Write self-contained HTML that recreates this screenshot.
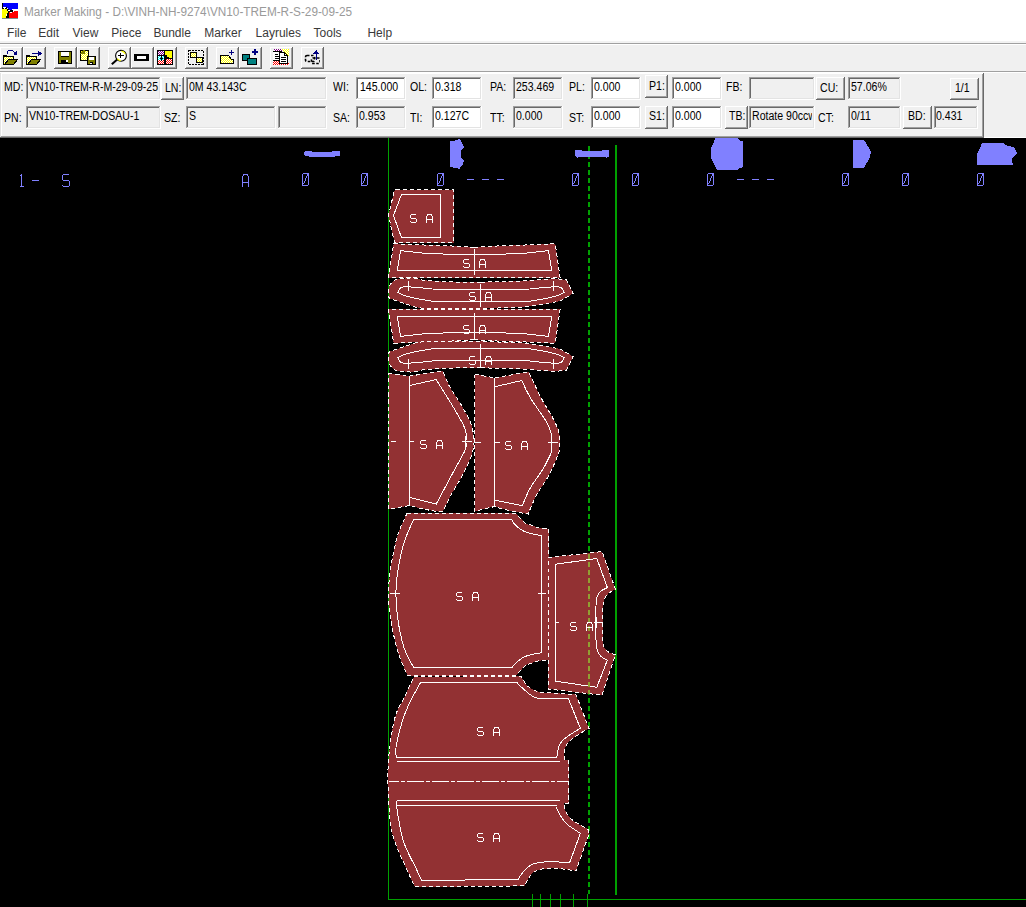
<!DOCTYPE html><html><head><meta charset="utf-8"><style>
html,body{margin:0;padding:0;}body{width:1026px;height:907px;overflow:hidden;position:relative;background:#f0f0f0;font-family:"Liberation Sans",sans-serif;}
div{box-sizing:border-box;}
</style></head><body>
<div style="position:absolute;left:0px;top:0px;width:1026px;height:43px;background:#ffffff;"></div>
<svg style="position:absolute;left:2px;top:3px" width="16" height="16" viewBox="0 0 16 16" shape-rendering="crispEdges"><rect x="0" y="0" width="1" height="1" fill="#000"/><rect x="1" y="0" width="15" height="1" fill="#0000ff"/><rect x="0" y="1" width="1" height="1" fill="#000"/><rect x="1" y="1" width="15" height="1" fill="#0000ff"/><rect x="0" y="2" width="1" height="1" fill="#000"/><rect x="1" y="2" width="15" height="1" fill="#0000ff"/><rect x="0" y="3" width="1" height="1" fill="#000"/><rect x="1" y="3" width="15" height="1" fill="#0000ff"/><rect x="0" y="4" width="1" height="1" fill="#000"/><rect x="1" y="4" width="3" height="1" fill="#ffffff"/><rect x="4" y="4" width="1" height="1" fill="#000"/><rect x="5" y="4" width="11" height="1" fill="#0000ff"/><rect x="0" y="5" width="2" height="1" fill="#000"/><rect x="2" y="5" width="1" height="1" fill="#ffffff"/><rect x="3" y="5" width="2" height="1" fill="#000"/><rect x="5" y="5" width="1" height="1" fill="#ffffff"/><rect x="6" y="5" width="10" height="1" fill="#0000ff"/><rect x="0" y="6" width="5" height="1" fill="#ffff00"/><rect x="5" y="6" width="2" height="1" fill="#000"/><rect x="7" y="6" width="3" height="1" fill="#0000ff"/><rect x="10" y="6" width="6" height="1" fill="#ffffff"/><rect x="0" y="7" width="5" height="1" fill="#ffff00"/><rect x="5" y="7" width="1" height="1" fill="#000"/><rect x="6" y="7" width="2" height="1" fill="#ffffff"/><rect x="8" y="7" width="3" height="1" fill="#000"/><rect x="11" y="7" width="5" height="1" fill="#ffffff"/><rect x="0" y="8" width="6" height="1" fill="#ffff00"/><rect x="6" y="8" width="5" height="1" fill="#000"/><rect x="11" y="8" width="1" height="1" fill="#ffffff"/><rect x="12" y="8" width="4" height="1" fill="#ff0000"/><rect x="0" y="9" width="6" height="1" fill="#ffff00"/><rect x="6" y="9" width="1" height="1" fill="#000"/><rect x="7" y="9" width="1" height="1" fill="#ff0000"/><rect x="8" y="9" width="2" height="1" fill="#ffffff"/><rect x="10" y="9" width="6" height="1" fill="#ff0000"/><rect x="0" y="10" width="5" height="1" fill="#ffff00"/><rect x="5" y="10" width="2" height="1" fill="#000"/><rect x="7" y="10" width="9" height="1" fill="#ff0000"/><rect x="0" y="11" width="4" height="1" fill="#ffff00"/><rect x="4" y="11" width="1" height="1" fill="#ffffff"/><rect x="5" y="11" width="2" height="1" fill="#000"/><rect x="7" y="11" width="9" height="1" fill="#ff0000"/><rect x="0" y="12" width="4" height="1" fill="#ffff00"/><rect x="4" y="12" width="1" height="1" fill="#ffffff"/><rect x="5" y="12" width="2" height="1" fill="#000"/><rect x="7" y="12" width="9" height="1" fill="#ff0000"/><rect x="0" y="13" width="4" height="1" fill="#ffff00"/><rect x="4" y="13" width="3" height="1" fill="#000"/><rect x="7" y="13" width="9" height="1" fill="#ff0000"/><rect x="0" y="14" width="4" height="1" fill="#ffff00"/><rect x="4" y="14" width="3" height="1" fill="#000"/><rect x="7" y="14" width="9" height="1" fill="#ff0000"/><rect x="0" y="15" width="16" height="1" fill="#7f8f8f"/></svg>
<div style="position:absolute;left:24px;top:6.09px;font-size:12px;line-height:12px;color:#9a9a9a;white-space:nowrap;transform:scaleX(0.981800766283525);transform-origin:0 0;">Marker Making - D:\VINH-NH-9274\VN10-TREM-R-S-29-09-25</div>
<div style="position:absolute;left:7.1px;top:27.09px;font-size:12px;line-height:12px;color:#3a3a3a;white-space:nowrap;">File</div>
<div style="position:absolute;left:38.3px;top:27.09px;font-size:12px;line-height:12px;color:#3a3a3a;white-space:nowrap;">Edit</div>
<div style="position:absolute;left:72.5px;top:27.09px;font-size:12px;line-height:12px;color:#3a3a3a;white-space:nowrap;">View</div>
<div style="position:absolute;left:111.3px;top:27.09px;font-size:12px;line-height:12px;color:#3a3a3a;white-space:nowrap;">Piece</div>
<div style="position:absolute;left:153.5px;top:27.09px;font-size:12px;line-height:12px;color:#3a3a3a;white-space:nowrap;">Bundle</div>
<div style="position:absolute;left:204.3px;top:27.09px;font-size:12px;line-height:12px;color:#3a3a3a;white-space:nowrap;">Marker</div>
<div style="position:absolute;left:255.6px;top:27.09px;font-size:12px;line-height:12px;color:#3a3a3a;white-space:nowrap;">Layrules</div>
<div style="position:absolute;left:313.6px;top:27.09px;font-size:12px;line-height:12px;color:#3a3a3a;white-space:nowrap;">Tools</div>
<div style="position:absolute;left:367.4px;top:27.09px;font-size:12px;line-height:12px;color:#3a3a3a;white-space:nowrap;">Help</div>
<div style="position:absolute;left:0px;top:41px;width:1026px;height:2px;background:#f2f2f2;"></div>
<div style="position:absolute;left:0px;top:43px;width:1026px;height:1px;background:#a0a0a0;"></div>
<div style="position:absolute;left:0px;top:44px;width:1026px;height:1px;background:#ffffff;"></div>
<div style="position:absolute;left:0px;top:45px;width:1026px;height:26px;background:#f0f0f0;"></div>
<div style="position:absolute;left:0px;top:71px;width:1026px;height:1px;background:#a0a0a0;"></div>
<div style="position:absolute;left:0px;top:72px;width:1026px;height:1px;background:#ffffff;"></div>
<div style="position:absolute;left:0px;top:47px;width:23px;height:22px;background:#696969;"></div>
<div style="position:absolute;left:0px;top:47px;width:22px;height:21px;background:#ffffff;"></div>
<div style="position:absolute;left:1px;top:48px;width:21px;height:20px;background:#a0a0a0;"></div>
<div style="position:absolute;left:1px;top:48px;width:20px;height:19px;background:#f0f0f0;"></div>
<div style="position:absolute;left:23px;top:47px;width:23px;height:22px;background:#696969;"></div>
<div style="position:absolute;left:23px;top:47px;width:22px;height:21px;background:#ffffff;"></div>
<div style="position:absolute;left:24px;top:48px;width:21px;height:20px;background:#a0a0a0;"></div>
<div style="position:absolute;left:24px;top:48px;width:20px;height:19px;background:#f0f0f0;"></div>
<div style="position:absolute;left:54px;top:47px;width:23px;height:22px;background:#696969;"></div>
<div style="position:absolute;left:54px;top:47px;width:22px;height:21px;background:#ffffff;"></div>
<div style="position:absolute;left:55px;top:48px;width:21px;height:20px;background:#a0a0a0;"></div>
<div style="position:absolute;left:55px;top:48px;width:20px;height:19px;background:#f0f0f0;"></div>
<div style="position:absolute;left:77px;top:47px;width:23px;height:22px;background:#696969;"></div>
<div style="position:absolute;left:77px;top:47px;width:22px;height:21px;background:#ffffff;"></div>
<div style="position:absolute;left:78px;top:48px;width:21px;height:20px;background:#a0a0a0;"></div>
<div style="position:absolute;left:78px;top:48px;width:20px;height:19px;background:#f0f0f0;"></div>
<div style="position:absolute;left:108px;top:47px;width:23px;height:22px;background:#696969;"></div>
<div style="position:absolute;left:108px;top:47px;width:22px;height:21px;background:#ffffff;"></div>
<div style="position:absolute;left:109px;top:48px;width:21px;height:20px;background:#a0a0a0;"></div>
<div style="position:absolute;left:109px;top:48px;width:20px;height:19px;background:#f0f0f0;"></div>
<div style="position:absolute;left:131px;top:47px;width:23px;height:22px;background:#696969;"></div>
<div style="position:absolute;left:131px;top:47px;width:22px;height:21px;background:#ffffff;"></div>
<div style="position:absolute;left:132px;top:48px;width:21px;height:20px;background:#a0a0a0;"></div>
<div style="position:absolute;left:132px;top:48px;width:20px;height:19px;background:#f0f0f0;"></div>
<div style="position:absolute;left:154px;top:47px;width:23px;height:22px;background:#696969;"></div>
<div style="position:absolute;left:154px;top:47px;width:22px;height:21px;background:#ffffff;"></div>
<div style="position:absolute;left:155px;top:48px;width:21px;height:20px;background:#a0a0a0;"></div>
<div style="position:absolute;left:155px;top:48px;width:20px;height:19px;background:#f0f0f0;"></div>
<div style="position:absolute;left:185px;top:47px;width:23px;height:22px;background:#696969;"></div>
<div style="position:absolute;left:185px;top:47px;width:22px;height:21px;background:#ffffff;"></div>
<div style="position:absolute;left:186px;top:48px;width:21px;height:20px;background:#a0a0a0;"></div>
<div style="position:absolute;left:186px;top:48px;width:20px;height:19px;background:#f0f0f0;"></div>
<div style="position:absolute;left:216px;top:47px;width:23px;height:22px;background:#696969;"></div>
<div style="position:absolute;left:216px;top:47px;width:22px;height:21px;background:#ffffff;"></div>
<div style="position:absolute;left:217px;top:48px;width:21px;height:20px;background:#a0a0a0;"></div>
<div style="position:absolute;left:217px;top:48px;width:20px;height:19px;background:#f0f0f0;"></div>
<div style="position:absolute;left:239px;top:47px;width:23px;height:22px;background:#696969;"></div>
<div style="position:absolute;left:239px;top:47px;width:22px;height:21px;background:#ffffff;"></div>
<div style="position:absolute;left:240px;top:48px;width:21px;height:20px;background:#a0a0a0;"></div>
<div style="position:absolute;left:240px;top:48px;width:20px;height:19px;background:#f0f0f0;"></div>
<div style="position:absolute;left:270px;top:47px;width:23px;height:22px;background:#696969;"></div>
<div style="position:absolute;left:270px;top:47px;width:22px;height:21px;background:#ffffff;"></div>
<div style="position:absolute;left:271px;top:48px;width:21px;height:20px;background:#a0a0a0;"></div>
<div style="position:absolute;left:271px;top:48px;width:20px;height:19px;background:#f0f0f0;"></div>
<div style="position:absolute;left:301px;top:47px;width:23px;height:22px;background:#696969;"></div>
<div style="position:absolute;left:301px;top:47px;width:22px;height:21px;background:#ffffff;"></div>
<div style="position:absolute;left:302px;top:48px;width:21px;height:20px;background:#a0a0a0;"></div>
<div style="position:absolute;left:302px;top:48px;width:20px;height:19px;background:#f0f0f0;"></div>
<svg width="0" height="0" style="position:absolute"><defs>
<pattern id="chy" width="2" height="2" patternUnits="userSpaceOnUse"><rect width="2" height="2" fill="#ffff00"/><rect width="1" height="1" fill="#ffffff"/><rect x="1" y="1" width="1" height="1" fill="#ffffff"/></pattern>
<pattern id="chr" width="2" height="2" patternUnits="userSpaceOnUse"><rect width="2" height="2" fill="#ff0000"/><rect width="1" height="1" fill="#ffffff"/><rect x="1" y="1" width="1" height="1" fill="#ffffff"/></pattern>
<pattern id="chp" width="2" height="2" patternUnits="userSpaceOnUse"><rect width="2" height="2" fill="#800080"/><rect width="1" height="1" fill="#ffffff"/><rect x="1" y="1" width="1" height="1" fill="#ffffff"/></pattern>
<pattern id="chc" width="2" height="2" patternUnits="userSpaceOnUse"><rect width="2" height="2" fill="#00ffff"/><rect width="1" height="1" fill="#ffffff"/><rect x="1" y="1" width="1" height="1" fill="#ffffff"/></pattern>
</defs></svg>
<svg style="position:absolute;left:3px;top:49px" width="16" height="16" viewBox="0 0 16 16" shape-rendering="crispEdges"><rect x="0" y="6" width="4" height="1" fill="#000"/>
<rect x="0" y="7" width="11" height="9" fill="#000"/>
<rect x="1" y="8" width="9" height="7" fill="url(#chy)"/>
<polygon points="1.5,15.5 5.5,10.5 14.5,10.5 10.5,15.5" fill="#808000" stroke="#000" stroke-width="1"/><path d="M4.5,4.5 L4.5,2.5 L5.5,1.5 L9.5,1.5 L11.5,3.5" fill="none" stroke="#000080" stroke-width="1"/>
<polygon points="10,4 14,2 14,6" fill="#000080"/><rect x="11" y="3" width="3" height="3" fill="#000080"/></svg>
<svg style="position:absolute;left:26px;top:49px" width="16" height="16" viewBox="0 0 16 16" shape-rendering="crispEdges"><rect x="0" y="6" width="4" height="1" fill="#000"/>
<rect x="0" y="7" width="11" height="9" fill="#000"/>
<rect x="1" y="8" width="9" height="7" fill="url(#chy)"/>
<polygon points="1.5,15.5 5.5,10.5 14.5,10.5 10.5,15.5" fill="#808000" stroke="#000" stroke-width="1"/><rect x="6" y="4" width="8" height="1" fill="#000080"/><polygon points="12,1.5 16,4.5 12,7.5" fill="#000080"/></svg>
<svg style="position:absolute;left:57px;top:49px" width="16" height="16" viewBox="0 0 16 16" shape-rendering="crispEdges"><rect x="1" y="2" width="14" height="13" fill="#000"/>
<rect x="2" y="3" width="12" height="11" fill="#808000"/>
<rect x="4" y="3" width="8" height="5" fill="#000"/><rect x="4" y="3" width="8" height="4" fill="#fff"/>
<rect x="4" y="11" width="7" height="4" fill="#000"/><rect x="9" y="11" width="2" height="2" fill="#fff"/></svg>
<svg style="position:absolute;left:80px;top:49px" width="16" height="16" viewBox="0 0 16 16" shape-rendering="crispEdges"><rect x="0" y="1" width="9" height="11" fill="#000"/>
<rect x="1" y="2" width="7" height="9" fill="url(#chy)"/>
<polygon points="0,4 3,1 5,1 5,5 0,5" fill="#808000"/>
<rect x="7" y="7" width="9" height="9" fill="#000"/>
<rect x="8" y="8" width="7" height="7" fill="#808000"/>
<rect x="9" y="8" width="5" height="3" fill="#fff"/><rect x="10" y="13" width="3" height="2" fill="#000"/><rect x="10" y="14" width="2" height="1" fill="#fff"/></svg>
<svg style="position:absolute;left:111px;top:49px" width="16" height="16" viewBox="0 0 16 16" shape-rendering="crispEdges"><circle cx="10" cy="6.8" r="5.4" fill="#fff" stroke="#000" stroke-width="1.1" shape-rendering="auto"/>
<path d="M6.2,9.6 A5,5 0 0 0 9.8,11.6" fill="none" stroke="#ffff00" stroke-width="1.3" shape-rendering="auto"/>
<path d="M10.5,2.2 A5,5 0 0 1 14.2,4.8" fill="none" stroke="#ffff00" stroke-width="1.3" shape-rendering="auto"/>
<rect x="7" y="6" width="6" height="1" fill="#000"/><rect x="9" y="4" width="1" height="5" fill="#000"/>
<line x1="0.8" y1="15.2" x2="6.2" y2="10.4" stroke="#000" stroke-width="2" shape-rendering="auto"/></svg>
<svg style="position:absolute;left:134px;top:49px" width="16" height="16" viewBox="0 0 16 16" shape-rendering="crispEdges"><rect x="0" y="5" width="15" height="7" fill="#000"/><rect x="3" y="7" width="9" height="3" fill="#fff"/></svg>
<svg style="position:absolute;left:157px;top:49px" width="16" height="16" viewBox="0 0 16 16" shape-rendering="crispEdges"><rect x="0" y="1" width="16" height="15" fill="#000"/>
<rect x="1" y="2" width="6" height="4" fill="url(#chp)"/>
<polygon points="8,2 15,2 15,9 12,9 12,8 10,8 10,6 8,6" fill="#ffff00"/>
<rect x="1" y="7" width="6" height="4" fill="url(#chc)"/>
<rect x="1" y="11" width="6" height="4" fill="url(#chr)"/>
<rect x="9" y="10" width="6" height="5" fill="url(#chr)"/>
<rect x="3" y="9" width="3" height="1" fill="#000"/><rect x="4" y="7" width="1" height="5" fill="#000"/></svg>
<svg style="position:absolute;left:188px;top:49px" width="16" height="16" viewBox="0 0 16 16" shape-rendering="crispEdges"><rect x="0.5" y="1.5" width="15" height="14" fill="none" stroke="#000" stroke-dasharray="2 1"/>
<rect x="2" y="3" width="7" height="6" fill="#000"/><rect x="3" y="4" width="5" height="4" fill="url(#chy)"/>
<rect x="8" y="8" width="7" height="6" fill="#000"/><rect x="9" y="9" width="5" height="4" fill="url(#chy)"/></svg>
<svg style="position:absolute;left:219px;top:49px" width="16" height="16" viewBox="0 0 16 16" shape-rendering="crispEdges"><polygon points="1.5,6.5 9.5,6.5 12.5,10.5 14.5,10.5 14.5,14.5 1.5,14.5" fill="url(#chy)" stroke="#000" stroke-width="1"/>
<rect x="10" y="3" width="5" height="1" fill="#000080"/><rect x="12" y="1" width="1" height="5" fill="#000080"/></svg>
<svg style="position:absolute;left:242px;top:49px" width="16" height="16" viewBox="0 0 16 16" shape-rendering="crispEdges"><rect x="0" y="5" width="8" height="7" fill="#000"/><rect x="1" y="6" width="6" height="5" fill="#008080"/>
<rect x="5" y="9" width="10" height="7" fill="#000"/><rect x="6" y="10" width="8" height="5" fill="#008080"/>
<rect x="10" y="2" width="6" height="2" fill="#000080"/><rect x="12" y="0" width="2" height="6" fill="#000080"/></svg>
<svg style="position:absolute;left:273px;top:49px" width="16" height="16" viewBox="0 0 16 16" shape-rendering="crispEdges"><rect x="1" y="0" width="8" height="2" fill="url(#chp)"/>
<polygon points="8,0 16,0 16,8" fill="url(#chy)"/>
<rect x="0" y="12" width="7" height="4" fill="url(#chr)"/>
<rect x="6" y="14" width="10" height="2" fill="url(#chr)"/>
<rect x="0" y="2" width="9" height="10" fill="#fff"/>
<rect x="0" y="2" width="9" height="1" fill="#000"/>
<rect x="2" y="5" width="3" height="1" fill="#000"/><rect x="2" y="7" width="4" height="1" fill="#000"/><rect x="2" y="9" width="4" height="1" fill="#000"/><rect x="0" y="11" width="6" height="1" fill="#000"/>
<polygon points="6.5,3.5 11.5,3.5 14.5,6.5 14.5,14.5 6.5,14.5" fill="#fff" stroke="#000" stroke-width="1"/>
<rect x="11" y="4" width="1" height="3" fill="#000"/><rect x="11" y="6" width="3" height="1" fill="#000"/>
<rect x="8" y="8" width="5" height="1" fill="#000"/><rect x="8" y="10" width="5" height="1" fill="#000"/><rect x="8" y="12" width="5" height="1" fill="#000"/></svg>
<svg style="position:absolute;left:304px;top:49px" width="16" height="16" viewBox="0 0 16 16" shape-rendering="crispEdges"><rect x="1.5" y="6.5" width="9" height="6" rx="1.5" fill="none" stroke="#000" stroke-width="1.6" stroke-dasharray="2.5 1.5" shape-rendering="auto"/>
<rect x="7.5" y="9" width="8.5" height="5.5" rx="1.5" fill="none" stroke="#000" stroke-width="1.6" stroke-dasharray="2.5 1.5" shape-rendering="auto"/>
<rect x="11.5" y="4" width="1.5" height="7" fill="#000080"/><polygon points="9,5 12.25,1 15.5,5" fill="#000080"/></svg>
<div style="position:absolute;left:0px;top:73px;width:984px;height:65px;background:#696969;"></div>
<div style="position:absolute;left:0px;top:73px;width:983px;height:64px;background:#ffffff;"></div>
<div style="position:absolute;left:1px;top:74px;width:982px;height:63px;background:#a0a0a0;"></div>
<div style="position:absolute;left:1px;top:74px;width:981px;height:62px;background:#f0f0f0;"></div>
<div style="position:absolute;left:0px;top:73px;width:1px;height:64px;background:#e3e3e3;"></div>
<div style="position:absolute;left:1px;top:73px;width:1px;height:63px;background:#ffffff;"></div>
<div style="position:absolute;left:984px;top:137px;width:42px;height:1px;background:#ffffff;"></div>
<div style="position:absolute;left:3.5px;top:81.09px;font-size:12px;line-height:12px;color:#000;white-space:nowrap;transform:scaleX(0.88);transform-origin:0 0;">MD:</div>
<div style="position:absolute;left:26px;top:77px;width:135px;height:23px;background:#ffffff;"></div>
<div style="position:absolute;left:26px;top:77px;width:134px;height:22px;background:#a0a0a0;"></div>
<div style="position:absolute;left:27px;top:78px;width:133px;height:21px;background:#e3e3e3;"></div>
<div style="position:absolute;left:27px;top:78px;width:132px;height:20px;background:#696969;"></div>
<div style="position:absolute;left:28px;top:79px;width:131px;height:19px;background:#f0f0f0;"></div>
<div style="position:absolute;left:29px;top:81.09px;font-size:12px;line-height:12px;color:#000;white-space:nowrap;transform:scaleX(0.88);transform-origin:0 0;">VN10-TREM-R-M-29-09-25</div>
<div style="position:absolute;left:161px;top:77px;width:23px;height:23px;background:#696969;"></div>
<div style="position:absolute;left:161px;top:77px;width:22px;height:22px;background:#ffffff;"></div>
<div style="position:absolute;left:162px;top:78px;width:21px;height:21px;background:#a0a0a0;"></div>
<div style="position:absolute;left:162px;top:78px;width:20px;height:20px;background:#f0f0f0;"></div>
<div style="position:absolute;left:164.5px;top:82.09px;font-size:12px;line-height:12px;color:#000;white-space:nowrap;transform:scaleX(0.88);transform-origin:0 0;">LN:</div>
<div style="position:absolute;left:186px;top:77px;width:141px;height:23px;background:#ffffff;"></div>
<div style="position:absolute;left:186px;top:77px;width:140px;height:22px;background:#a0a0a0;"></div>
<div style="position:absolute;left:187px;top:78px;width:139px;height:21px;background:#e3e3e3;"></div>
<div style="position:absolute;left:187px;top:78px;width:138px;height:20px;background:#696969;"></div>
<div style="position:absolute;left:188px;top:79px;width:137px;height:19px;background:#f0f0f0;"></div>
<div style="position:absolute;left:189px;top:81.09px;font-size:12px;line-height:12px;color:#000;white-space:nowrap;transform:scaleX(0.88);transform-origin:0 0;">0M 43.143C</div>
<div style="position:absolute;left:333px;top:81.09px;font-size:12px;line-height:12px;color:#000;white-space:nowrap;transform:scaleX(0.88);transform-origin:0 0;">WI:</div>
<div style="position:absolute;left:356px;top:77px;width:50px;height:23px;background:#ffffff;"></div>
<div style="position:absolute;left:356px;top:77px;width:49px;height:22px;background:#a0a0a0;"></div>
<div style="position:absolute;left:357px;top:78px;width:48px;height:21px;background:#e3e3e3;"></div>
<div style="position:absolute;left:357px;top:78px;width:47px;height:20px;background:#696969;"></div>
<div style="position:absolute;left:358px;top:79px;width:46px;height:19px;background:#ffffff;"></div>
<div style="position:absolute;left:360px;top:81.09px;font-size:12px;line-height:12px;color:#000;white-space:nowrap;transform:scaleX(0.88);transform-origin:0 0;">145.000</div>
<div style="position:absolute;left:410px;top:81.09px;font-size:12px;line-height:12px;color:#000;white-space:nowrap;transform:scaleX(0.88);transform-origin:0 0;">OL:</div>
<div style="position:absolute;left:432px;top:77px;width:50px;height:23px;background:#ffffff;"></div>
<div style="position:absolute;left:432px;top:77px;width:49px;height:22px;background:#a0a0a0;"></div>
<div style="position:absolute;left:433px;top:78px;width:48px;height:21px;background:#e3e3e3;"></div>
<div style="position:absolute;left:433px;top:78px;width:47px;height:20px;background:#696969;"></div>
<div style="position:absolute;left:434px;top:79px;width:46px;height:19px;background:#ffffff;"></div>
<div style="position:absolute;left:435px;top:81.09px;font-size:12px;line-height:12px;color:#000;white-space:nowrap;transform:scaleX(0.88);transform-origin:0 0;">0.318</div>
<div style="position:absolute;left:489.5px;top:81.09px;font-size:12px;line-height:12px;color:#000;white-space:nowrap;transform:scaleX(0.88);transform-origin:0 0;">PA:</div>
<div style="position:absolute;left:513px;top:77px;width:50px;height:23px;background:#ffffff;"></div>
<div style="position:absolute;left:513px;top:77px;width:49px;height:22px;background:#a0a0a0;"></div>
<div style="position:absolute;left:514px;top:78px;width:48px;height:21px;background:#e3e3e3;"></div>
<div style="position:absolute;left:514px;top:78px;width:47px;height:20px;background:#696969;"></div>
<div style="position:absolute;left:515px;top:79px;width:46px;height:19px;background:#f0f0f0;"></div>
<div style="position:absolute;left:516px;top:81.09px;font-size:12px;line-height:12px;color:#000;white-space:nowrap;transform:scaleX(0.88);transform-origin:0 0;">253.469</div>
<div style="position:absolute;left:569px;top:81.09px;font-size:12px;line-height:12px;color:#000;white-space:nowrap;transform:scaleX(0.88);transform-origin:0 0;">PL:</div>
<div style="position:absolute;left:591px;top:77px;width:50px;height:23px;background:#ffffff;"></div>
<div style="position:absolute;left:591px;top:77px;width:49px;height:22px;background:#a0a0a0;"></div>
<div style="position:absolute;left:592px;top:78px;width:48px;height:21px;background:#e3e3e3;"></div>
<div style="position:absolute;left:592px;top:78px;width:47px;height:20px;background:#696969;"></div>
<div style="position:absolute;left:593px;top:79px;width:46px;height:19px;background:#ffffff;"></div>
<div style="position:absolute;left:594px;top:81.09px;font-size:12px;line-height:12px;color:#000;white-space:nowrap;transform:scaleX(0.88);transform-origin:0 0;">0.000</div>
<div style="position:absolute;left:645px;top:75px;width:23px;height:23px;background:#696969;"></div>
<div style="position:absolute;left:645px;top:75px;width:22px;height:22px;background:#ffffff;"></div>
<div style="position:absolute;left:646px;top:76px;width:21px;height:21px;background:#a0a0a0;"></div>
<div style="position:absolute;left:646px;top:76px;width:20px;height:20px;background:#f0f0f0;"></div>
<div style="position:absolute;left:648.5px;top:80.09px;font-size:12px;line-height:12px;color:#000;white-space:nowrap;transform:scaleX(0.88);transform-origin:0 0;">P1:</div>
<div style="position:absolute;left:672px;top:77px;width:50px;height:23px;background:#ffffff;"></div>
<div style="position:absolute;left:672px;top:77px;width:49px;height:22px;background:#a0a0a0;"></div>
<div style="position:absolute;left:673px;top:78px;width:48px;height:21px;background:#e3e3e3;"></div>
<div style="position:absolute;left:673px;top:78px;width:47px;height:20px;background:#696969;"></div>
<div style="position:absolute;left:674px;top:79px;width:46px;height:19px;background:#ffffff;"></div>
<div style="position:absolute;left:675px;top:81.09px;font-size:12px;line-height:12px;color:#000;white-space:nowrap;transform:scaleX(0.88);transform-origin:0 0;">0.000</div>
<div style="position:absolute;left:726px;top:81.09px;font-size:12px;line-height:12px;color:#000;white-space:nowrap;transform:scaleX(0.88);transform-origin:0 0;">FB:</div>
<div style="position:absolute;left:749px;top:77px;width:66px;height:23px;background:#ffffff;"></div>
<div style="position:absolute;left:749px;top:77px;width:65px;height:22px;background:#a0a0a0;"></div>
<div style="position:absolute;left:750px;top:78px;width:64px;height:21px;background:#e3e3e3;"></div>
<div style="position:absolute;left:750px;top:78px;width:63px;height:20px;background:#696969;"></div>
<div style="position:absolute;left:751px;top:79px;width:62px;height:19px;background:#f0f0f0;"></div>
<div style="position:absolute;left:816px;top:77px;width:29px;height:23px;background:#696969;"></div>
<div style="position:absolute;left:816px;top:77px;width:28px;height:22px;background:#ffffff;"></div>
<div style="position:absolute;left:817px;top:78px;width:27px;height:21px;background:#a0a0a0;"></div>
<div style="position:absolute;left:817px;top:78px;width:26px;height:20px;background:#f0f0f0;"></div>
<div style="position:absolute;left:819.5px;top:82.09px;font-size:12px;line-height:12px;color:#000;white-space:nowrap;transform:scaleX(0.88);transform-origin:0 0;">CU:</div>
<div style="position:absolute;left:848px;top:77px;width:53px;height:23px;background:#ffffff;"></div>
<div style="position:absolute;left:848px;top:77px;width:52px;height:22px;background:#a0a0a0;"></div>
<div style="position:absolute;left:849px;top:78px;width:51px;height:21px;background:#e3e3e3;"></div>
<div style="position:absolute;left:849px;top:78px;width:50px;height:20px;background:#696969;"></div>
<div style="position:absolute;left:850px;top:79px;width:49px;height:19px;background:#f0f0f0;"></div>
<div style="position:absolute;left:851px;top:81.09px;font-size:12px;line-height:12px;color:#000;white-space:nowrap;transform:scaleX(0.88);transform-origin:0 0;">57.06%</div>
<div style="position:absolute;left:950px;top:78px;width:29px;height:22px;background:#696969;"></div>
<div style="position:absolute;left:950px;top:78px;width:28px;height:21px;background:#ffffff;"></div>
<div style="position:absolute;left:951px;top:79px;width:27px;height:20px;background:#a0a0a0;"></div>
<div style="position:absolute;left:951px;top:79px;width:26px;height:19px;background:#f0f0f0;"></div>
<div style="position:absolute;left:955px;top:82.09px;font-size:12px;line-height:12px;color:#000;white-space:nowrap;transform:scaleX(0.88);transform-origin:0 0;">1/1</div>
<div style="position:absolute;left:3.5px;top:112.09px;font-size:12px;line-height:12px;color:#000;white-space:nowrap;transform:scaleX(0.88);transform-origin:0 0;">PN:</div>
<div style="position:absolute;left:26px;top:106px;width:135px;height:23px;background:#ffffff;"></div>
<div style="position:absolute;left:26px;top:106px;width:134px;height:22px;background:#a0a0a0;"></div>
<div style="position:absolute;left:27px;top:107px;width:133px;height:21px;background:#e3e3e3;"></div>
<div style="position:absolute;left:27px;top:107px;width:132px;height:20px;background:#696969;"></div>
<div style="position:absolute;left:28px;top:108px;width:131px;height:19px;background:#f0f0f0;"></div>
<div style="position:absolute;left:29px;top:110.09px;font-size:12px;line-height:12px;color:#000;white-space:nowrap;transform:scaleX(0.88);transform-origin:0 0;">VN10-TREM-DOSAU-1</div>
<div style="position:absolute;left:164px;top:112.09px;font-size:12px;line-height:12px;color:#000;white-space:nowrap;transform:scaleX(0.88);transform-origin:0 0;">SZ:</div>
<div style="position:absolute;left:186px;top:106px;width:90px;height:23px;background:#ffffff;"></div>
<div style="position:absolute;left:186px;top:106px;width:89px;height:22px;background:#a0a0a0;"></div>
<div style="position:absolute;left:187px;top:107px;width:88px;height:21px;background:#e3e3e3;"></div>
<div style="position:absolute;left:187px;top:107px;width:87px;height:20px;background:#696969;"></div>
<div style="position:absolute;left:188px;top:108px;width:86px;height:19px;background:#f0f0f0;"></div>
<div style="position:absolute;left:189px;top:110.09px;font-size:12px;line-height:12px;color:#000;white-space:nowrap;transform:scaleX(0.88);transform-origin:0 0;">S</div>
<div style="position:absolute;left:278px;top:106px;width:49px;height:23px;background:#ffffff;"></div>
<div style="position:absolute;left:278px;top:106px;width:48px;height:22px;background:#a0a0a0;"></div>
<div style="position:absolute;left:279px;top:107px;width:47px;height:21px;background:#e3e3e3;"></div>
<div style="position:absolute;left:279px;top:107px;width:46px;height:20px;background:#696969;"></div>
<div style="position:absolute;left:280px;top:108px;width:45px;height:19px;background:#f0f0f0;"></div>
<div style="position:absolute;left:333px;top:112.09px;font-size:12px;line-height:12px;color:#000;white-space:nowrap;transform:scaleX(0.88);transform-origin:0 0;">SA:</div>
<div style="position:absolute;left:356px;top:106px;width:50px;height:23px;background:#ffffff;"></div>
<div style="position:absolute;left:356px;top:106px;width:49px;height:22px;background:#a0a0a0;"></div>
<div style="position:absolute;left:357px;top:107px;width:48px;height:21px;background:#e3e3e3;"></div>
<div style="position:absolute;left:357px;top:107px;width:47px;height:20px;background:#696969;"></div>
<div style="position:absolute;left:358px;top:108px;width:46px;height:19px;background:#f0f0f0;"></div>
<div style="position:absolute;left:359px;top:110.09px;font-size:12px;line-height:12px;color:#000;white-space:nowrap;transform:scaleX(0.88);transform-origin:0 0;">0.953</div>
<div style="position:absolute;left:410px;top:112.09px;font-size:12px;line-height:12px;color:#000;white-space:nowrap;transform:scaleX(0.88);transform-origin:0 0;">TI:</div>
<div style="position:absolute;left:432px;top:106px;width:50px;height:23px;background:#ffffff;"></div>
<div style="position:absolute;left:432px;top:106px;width:49px;height:22px;background:#a0a0a0;"></div>
<div style="position:absolute;left:433px;top:107px;width:48px;height:21px;background:#e3e3e3;"></div>
<div style="position:absolute;left:433px;top:107px;width:47px;height:20px;background:#696969;"></div>
<div style="position:absolute;left:434px;top:108px;width:46px;height:19px;background:#ffffff;"></div>
<div style="position:absolute;left:435px;top:110.09px;font-size:12px;line-height:12px;color:#000;white-space:nowrap;transform:scaleX(0.88);transform-origin:0 0;">0.127C</div>
<div style="position:absolute;left:489.5px;top:112.09px;font-size:12px;line-height:12px;color:#000;white-space:nowrap;transform:scaleX(0.88);transform-origin:0 0;">TT:</div>
<div style="position:absolute;left:513px;top:106px;width:50px;height:23px;background:#ffffff;"></div>
<div style="position:absolute;left:513px;top:106px;width:49px;height:22px;background:#a0a0a0;"></div>
<div style="position:absolute;left:514px;top:107px;width:48px;height:21px;background:#e3e3e3;"></div>
<div style="position:absolute;left:514px;top:107px;width:47px;height:20px;background:#696969;"></div>
<div style="position:absolute;left:515px;top:108px;width:46px;height:19px;background:#f0f0f0;"></div>
<div style="position:absolute;left:516px;top:110.09px;font-size:12px;line-height:12px;color:#000;white-space:nowrap;transform:scaleX(0.88);transform-origin:0 0;">0.000</div>
<div style="position:absolute;left:569px;top:112.09px;font-size:12px;line-height:12px;color:#000;white-space:nowrap;transform:scaleX(0.88);transform-origin:0 0;">ST:</div>
<div style="position:absolute;left:591px;top:106px;width:50px;height:23px;background:#ffffff;"></div>
<div style="position:absolute;left:591px;top:106px;width:49px;height:22px;background:#a0a0a0;"></div>
<div style="position:absolute;left:592px;top:107px;width:48px;height:21px;background:#e3e3e3;"></div>
<div style="position:absolute;left:592px;top:107px;width:47px;height:20px;background:#696969;"></div>
<div style="position:absolute;left:593px;top:108px;width:46px;height:19px;background:#ffffff;"></div>
<div style="position:absolute;left:594px;top:110.09px;font-size:12px;line-height:12px;color:#000;white-space:nowrap;transform:scaleX(0.88);transform-origin:0 0;">0.000</div>
<div style="position:absolute;left:645px;top:106px;width:23px;height:23px;background:#696969;"></div>
<div style="position:absolute;left:645px;top:106px;width:22px;height:22px;background:#ffffff;"></div>
<div style="position:absolute;left:646px;top:107px;width:21px;height:21px;background:#a0a0a0;"></div>
<div style="position:absolute;left:646px;top:107px;width:20px;height:20px;background:#f0f0f0;"></div>
<div style="position:absolute;left:648.5px;top:110.09px;font-size:12px;line-height:12px;color:#000;white-space:nowrap;transform:scaleX(0.88);transform-origin:0 0;">S1:</div>
<div style="position:absolute;left:672px;top:106px;width:50px;height:23px;background:#ffffff;"></div>
<div style="position:absolute;left:672px;top:106px;width:49px;height:22px;background:#a0a0a0;"></div>
<div style="position:absolute;left:673px;top:107px;width:48px;height:21px;background:#e3e3e3;"></div>
<div style="position:absolute;left:673px;top:107px;width:47px;height:20px;background:#696969;"></div>
<div style="position:absolute;left:674px;top:108px;width:46px;height:19px;background:#ffffff;"></div>
<div style="position:absolute;left:675px;top:110.09px;font-size:12px;line-height:12px;color:#000;white-space:nowrap;transform:scaleX(0.88);transform-origin:0 0;">0.000</div>
<div style="position:absolute;left:725px;top:106px;width:23px;height:23px;background:#696969;"></div>
<div style="position:absolute;left:725px;top:106px;width:22px;height:22px;background:#ffffff;"></div>
<div style="position:absolute;left:726px;top:107px;width:21px;height:21px;background:#a0a0a0;"></div>
<div style="position:absolute;left:726px;top:107px;width:20px;height:20px;background:#f0f0f0;"></div>
<div style="position:absolute;left:729px;top:110.09px;font-size:12px;line-height:12px;color:#000;white-space:nowrap;transform:scaleX(0.88);transform-origin:0 0;">TB:</div>
<div style="position:absolute;left:749px;top:106px;width:66px;height:23px;background:#ffffff;"></div>
<div style="position:absolute;left:749px;top:106px;width:65px;height:22px;background:#a0a0a0;"></div>
<div style="position:absolute;left:750px;top:107px;width:64px;height:21px;background:#e3e3e3;"></div>
<div style="position:absolute;left:750px;top:107px;width:63px;height:20px;background:#696969;"></div>
<div style="position:absolute;left:751px;top:108px;width:62px;height:19px;background:#f0f0f0;"></div>
<div style="position:absolute;left:751px;top:108px;width:61px;height:18px;overflow:hidden">
<div style="position:absolute;left:1px;top:2.09px;font-size:12px;line-height:12px;color:#000;white-space:nowrap;transform:scaleX(0.88);transform-origin:0 0;">Rotate 90ccw</div>
</div>
<div style="position:absolute;left:818px;top:112.09px;font-size:12px;line-height:12px;color:#000;white-space:nowrap;transform:scaleX(0.88);transform-origin:0 0;">CT:</div>
<div style="position:absolute;left:848px;top:106px;width:53px;height:23px;background:#ffffff;"></div>
<div style="position:absolute;left:848px;top:106px;width:52px;height:22px;background:#a0a0a0;"></div>
<div style="position:absolute;left:849px;top:107px;width:51px;height:21px;background:#e3e3e3;"></div>
<div style="position:absolute;left:849px;top:107px;width:50px;height:20px;background:#696969;"></div>
<div style="position:absolute;left:850px;top:108px;width:49px;height:19px;background:#f0f0f0;"></div>
<div style="position:absolute;left:851px;top:110.09px;font-size:12px;line-height:12px;color:#000;white-space:nowrap;transform:scaleX(0.88);transform-origin:0 0;">0/11</div>
<div style="position:absolute;left:903px;top:106px;width:29px;height:23px;background:#696969;"></div>
<div style="position:absolute;left:903px;top:106px;width:28px;height:22px;background:#ffffff;"></div>
<div style="position:absolute;left:904px;top:107px;width:27px;height:21px;background:#a0a0a0;"></div>
<div style="position:absolute;left:904px;top:107px;width:26px;height:20px;background:#f0f0f0;"></div>
<div style="position:absolute;left:908px;top:110.09px;font-size:12px;line-height:12px;color:#000;white-space:nowrap;transform:scaleX(0.88);transform-origin:0 0;">BD:</div>
<div style="position:absolute;left:934px;top:106px;width:44px;height:23px;background:#ffffff;"></div>
<div style="position:absolute;left:934px;top:106px;width:43px;height:22px;background:#a0a0a0;"></div>
<div style="position:absolute;left:935px;top:107px;width:42px;height:21px;background:#e3e3e3;"></div>
<div style="position:absolute;left:935px;top:107px;width:41px;height:20px;background:#696969;"></div>
<div style="position:absolute;left:936px;top:108px;width:40px;height:19px;background:#f0f0f0;"></div>
<div style="position:absolute;left:936px;top:110.09px;font-size:12px;line-height:12px;color:#000;white-space:nowrap;transform:scaleX(0.88);transform-origin:0 0;">0.431</div>
<div style="position:absolute;left:0px;top:138px;width:1026px;height:769px;background:#000000;"></div>
<svg style="position:absolute;left:0;top:138px" width="1026" height="769" viewBox="0 138 1026 769">
<g shape-rendering="crispEdges">
<rect x="388" y="138" width="1" height="762" fill="#00a000"/>
<rect x="388" y="899" width="638" height="1" fill="#00a000"/>
<rect x="615" y="145" width="2" height="750" fill="#00a000"/>
<line x1="589" y1="146" x2="589" y2="894" stroke="#00a000" stroke-width="2" stroke-dasharray="5 3"/>
<rect x="532" y="894" width="1" height="13" fill="#00a000"/>
<rect x="540" y="894" width="1" height="13" fill="#00a000"/>
<rect x="550" y="894" width="1" height="13" fill="#00a000"/>
<rect x="560" y="894" width="1" height="13" fill="#00a000"/>
<rect x="573" y="894" width="1" height="13" fill="#00a000"/>
<rect x="587" y="894" width="1" height="13" fill="#00a000"/>
</g>
<g shape-rendering="crispEdges">
<polygon points="396.0,189.5 453.5,189.5 453.5,242.5 394.5,242.5 388.5,215.5 394.0,192.0" fill="#923133" stroke="#ffffff" stroke-width="1" stroke-dasharray="4 3"/>
<polygon points="401.5,194.5 440.5,194.5 440.5,237.5 401.5,237.5 393.5,215.5" fill="none" stroke="#ffffff" stroke-width="1"/>
<polygon points="474.5,247.3 452.0,246.0 428.5,245.2 393.7,243.8 388.5,277.8 474.5,277.8 474.5,277.8 560.1,277.8 555.3,243.8 520.5,245.2 497.0,246.0 474.5,247.3" fill="#923133" stroke="#ffffff" stroke-width="1" stroke-dasharray="4 3"/>
<polygon points="474.5,254.5 449.3,254.2 426.9,253.5 400.6,250.6 397.3,270.1 474.5,270.1 474.5,270.1 551.7,270.1 548.4,250.6 522.1,253.5 499.7,254.2 474.5,254.5" fill="none" stroke="#ffffff" stroke-width="1"/>
<polygon points="481.0,282.2 458.1,282.2 440.6,281.5 423.0,280.2 412.3,277.8 395.7,279.3 391.8,282.7 388.5,286.6 388.5,297.3 390.9,298.8 400.6,302.2 415.2,307.0 425.0,308.6 481.0,308.6 520.5,307.2 540.0,304.5 559.4,301.3 573.1,293.5 566.3,279.9 555.5,278.5 520.5,281.2" fill="#923133" stroke="#ffffff" stroke-width="1" stroke-dasharray="4 3"/>
<polygon points="481.0,289.5 431.8,289.0 418.2,287.5 405.5,286.6 400.6,287.5 397.7,292.4 403.5,295.3 415.2,298.3 431.8,301.2 481.0,301.5 481.0,301.5 530.2,301.2 546.8,298.3 558.5,295.3 564.3,292.4 561.4,287.5 556.5,286.6 543.8,287.5 530.2,289.0 481.0,289.5" fill="none" stroke="#ffffff" stroke-width="1"/>
<polygon points="474.5,339.7 452.0,341.0 428.5,341.8 393.7,343.2 388.5,309.2 474.5,309.2 474.5,309.2 560.1,309.2 555.3,343.2 520.5,341.8 497.0,341.0 474.5,339.7" fill="#923133" stroke="#ffffff" stroke-width="1" stroke-dasharray="4 3"/>
<polygon points="474.5,332.5 449.3,332.8 426.9,333.5 400.6,336.4 397.3,316.9 474.5,316.9 474.5,316.9 551.7,316.9 548.4,336.4 522.1,333.5 499.7,332.8 474.5,332.5" fill="none" stroke="#ffffff" stroke-width="1"/>
<polygon points="481.0,367.8 458.1,367.8 440.6,368.5 423.0,369.8 412.3,372.2 395.7,370.7 391.8,367.3 388.5,363.4 388.5,352.7 390.9,351.2 400.6,347.8 415.2,343.0 425.0,341.4 481.0,341.4 520.5,342.8 540.0,345.5 559.4,348.7 573.1,356.5 566.3,370.1 555.5,371.5 520.5,368.8" fill="#923133" stroke="#ffffff" stroke-width="1" stroke-dasharray="4 3"/>
<polygon points="481.0,360.5 431.8,361.0 418.2,362.5 405.5,363.4 400.6,362.5 397.7,357.6 403.5,354.7 415.2,351.7 431.8,348.8 481.0,348.5 481.0,348.5 530.2,348.8 546.8,351.7 558.5,354.7 564.3,357.6 561.4,362.5 556.5,363.4 543.8,362.5 530.2,361.0 481.0,360.5" fill="none" stroke="#ffffff" stroke-width="1"/>
<line x1="474.5" y1="248.5" x2="474.5" y2="274.5" stroke="#ffffff" stroke-width="1" />
<line x1="408.5" y1="281" x2="408.5" y2="291" stroke="#ffffff" stroke-width="1" />
<line x1="553.5" y1="281" x2="553.5" y2="291" stroke="#ffffff" stroke-width="1" />
<line x1="480.5" y1="283.5" x2="480.5" y2="306.5" stroke="#ffffff" stroke-width="1" />
<line x1="474.5" y1="312.5" x2="474.5" y2="338.5" stroke="#ffffff" stroke-width="1" />
<line x1="408.5" y1="359" x2="408.5" y2="369" stroke="#ffffff" stroke-width="1" />
<line x1="553.5" y1="359" x2="553.5" y2="369" stroke="#ffffff" stroke-width="1" />
<line x1="480.5" y1="343.5" x2="480.5" y2="366.5" stroke="#ffffff" stroke-width="1" />
<path d="M388.50,373.40 C388.50,373.40 408.80,376.20 408.80,376.20 C408.80,376.20 442.70,371.00 442.70,371.00 C442.70,371.00 446.93,381.72 450.10,387.50 C453.27,393.28 458.12,399.37 461.70,405.70 C465.28,412.03 469.53,419.45 471.60,425.50 C473.67,431.55 474.10,442.00 474.10,442.00 C474.10,442.00 473.67,449.52 471.60,455.30 C469.53,461.08 465.28,469.82 461.70,476.70 C458.12,483.58 453.25,490.73 450.10,496.60 C446.95,502.47 442.80,511.90 442.80,511.90 C442.80,511.90 437.67,511.73 432.00,510.70 C426.33,509.67 408.80,505.70 408.80,505.70 C408.80,505.70 388.50,509.00 388.50,509.00 C388.50,509.00 388.50,373.40 388.50,373.40 Z" fill="#923133" stroke="#ffffff" stroke-width="1" stroke-dasharray="4 3"/>
<path d="M409.60,385.50 C409.60,385.50 436.10,379.60 436.10,379.60 C436.10,379.60 448.58,399.10 453.40,407.30 C458.22,415.50 462.93,423.02 465.00,428.80 C467.07,434.58 465.80,442.00 465.80,442.00 C465.80,442.00 467.07,445.33 465.00,450.30 C462.93,455.27 458.20,462.83 453.40,471.80 C448.60,480.77 436.20,504.10 436.20,504.10 C436.20,504.10 409.70,497.50 409.70,497.50 C409.70,497.50 409.60,385.50 409.60,385.50 Z" fill="none" stroke="#ffffff" stroke-width="1"/>
<line x1="390.5" y1="441.5" x2="396" y2="441.5" stroke="#ffffff" stroke-width="1" />
<line x1="409.6" y1="441.5" x2="414" y2="441.5" stroke="#ffffff" stroke-width="1" />
<line x1="462" y1="441.5" x2="471.6" y2="441.5" stroke="#ffffff" stroke-width="1" />
<line x1="465.5" y1="436" x2="465.5" y2="447" stroke="#ffffff" stroke-width="1" />
<path d="M474.70,374.30 C474.70,374.30 494.60,377.90 494.60,377.90 C494.60,377.90 528.50,371.80 528.50,371.80 C528.50,371.80 537.43,390.88 541.70,399.00 C545.97,407.12 551.13,414.43 554.10,420.50 C557.07,426.57 558.68,430.15 559.50,435.40 C560.32,440.65 559.00,452.00 559.00,452.00 C559.00,452.00 553.72,466.25 550.00,473.40 C546.28,480.55 540.33,488.13 536.70,494.90 C533.07,501.67 528.20,514.00 528.20,514.00 C528.20,514.00 518.87,512.73 513.20,511.50 C507.53,510.27 494.20,506.60 494.20,506.60 C494.20,506.60 474.80,511.20 474.80,511.20 C474.80,511.20 474.70,374.30 474.70,374.30 Z" fill="#923133" stroke="#ffffff" stroke-width="1" stroke-dasharray="4 3"/>
<path d="M494.90,386.70 C494.90,386.70 521.90,380.50 521.90,380.50 C521.90,380.50 525.98,390.45 530.10,397.40 C534.22,404.35 543.02,415.87 546.60,422.20 C550.18,428.53 551.60,435.40 551.60,435.40 C551.60,435.40 551.60,452.00 551.60,452.00 C551.60,452.00 546.88,462.45 543.30,468.50 C539.72,474.55 533.58,482.10 530.10,488.30 C526.62,494.50 522.40,505.70 522.40,505.70 C522.40,505.70 494.20,500.00 494.20,500.00 C494.20,500.00 494.90,386.70 494.90,386.70 Z" fill="none" stroke="#ffffff" stroke-width="1"/>
<line x1="474.7" y1="442.5" x2="481" y2="442.5" stroke="#ffffff" stroke-width="1" />
<line x1="494.9" y1="442.5" x2="500" y2="442.5" stroke="#ffffff" stroke-width="1" />
<line x1="548" y1="442.5" x2="558" y2="442.5" stroke="#ffffff" stroke-width="1" />
<line x1="551.5" y1="437" x2="551.5" y2="448" stroke="#ffffff" stroke-width="1" />
<path d="M407.20,513.20 C407.20,513.20 515.00,513.30 515.00,513.30 C515.00,513.30 517.50,515.20 517.50,515.20 C517.50,515.20 523.45,521.75 525.70,523.40 C527.95,525.05 528.95,524.42 531.00,525.10 C533.05,525.78 535.08,526.90 538.00,527.50 C540.92,528.10 548.50,528.70 548.50,528.70 C548.50,528.70 548.50,659.80 548.50,659.80 C548.50,659.80 540.92,660.38 538.00,661.00 C535.08,661.62 533.05,662.75 531.00,663.50 C528.95,664.25 527.95,663.78 525.70,665.50 C523.45,667.22 517.50,673.80 517.50,673.80 C517.50,673.80 515.90,675.60 515.90,675.60 C515.90,675.60 407.80,675.60 407.80,675.60 C407.80,675.60 399.12,658.62 395.90,644.90 C392.68,631.18 388.50,610.50 388.50,593.30 C388.50,576.10 392.78,555.05 395.90,541.70 C399.02,528.35 407.20,513.20 407.20,513.20 Z" fill="#923133" stroke="#ffffff" stroke-width="1" stroke-dasharray="4 3"/>
<path d="M413.80,519.50 C413.80,519.50 511.70,519.30 511.70,519.30 C511.70,519.30 512.53,521.53 513.50,522.80 C514.47,524.07 515.65,525.43 517.50,526.90 C519.35,528.37 521.68,530.33 524.60,531.60 C527.52,532.87 532.18,533.87 535.00,534.50 C537.82,535.13 541.50,535.40 541.50,535.40 C541.50,535.40 541.50,652.80 541.50,652.80 C541.50,652.80 537.82,653.15 535.00,653.80 C532.18,654.45 527.52,655.43 524.60,656.70 C521.68,657.97 519.35,659.93 517.50,661.40 C515.65,662.87 514.42,664.45 513.50,665.50 C512.58,666.55 512.00,667.70 512.00,667.70 C512.00,667.70 413.80,667.70 413.80,667.70 C413.80,667.70 404.98,653.30 402.00,640.90 C399.02,628.50 395.90,608.50 395.90,593.30 C395.90,578.10 399.02,562.00 402.00,549.70 C404.98,537.40 413.80,519.50 413.80,519.50 Z" fill="none" stroke="#ffffff" stroke-width="1"/>
<line x1="389.6" y1="593.5" x2="400" y2="593.5" stroke="#ffffff" stroke-width="1" />
<line x1="537.8" y1="593.5" x2="545.7" y2="593.5" stroke="#ffffff" stroke-width="1" />
<line x1="541.5" y1="588" x2="541.5" y2="599" stroke="#ffffff" stroke-width="1" />
<path d="M548.30,557.60 C548.30,557.60 602.10,551.50 602.10,551.50 C602.10,551.50 615.40,589.40 615.40,589.40 C615.40,589.40 610.40,591.73 608.50,593.50 C606.60,595.27 604.97,597.17 604.00,600.00 C603.03,602.83 602.92,604.03 602.70,610.50 C602.48,616.97 602.48,632.72 602.70,638.80 C602.92,644.88 603.03,644.80 604.00,647.00 C604.97,649.20 606.60,650.73 608.50,652.00 C610.40,653.27 615.40,654.60 615.40,654.60 C615.40,654.60 602.10,695.20 602.10,695.20 C602.10,695.20 548.30,689.00 548.30,689.00 C548.30,689.00 548.30,557.60 548.30,557.60 Z" fill="#923133" stroke="#ffffff" stroke-width="1" stroke-dasharray="4 3"/>
<path d="M555.00,564.30 C555.00,564.30 596.80,558.50 596.80,558.50 C596.80,558.50 607.40,587.60 607.40,587.60 C607.40,587.60 602.23,589.93 600.50,591.50 C598.77,593.07 597.75,594.58 597.00,597.00 C596.25,599.42 596.17,598.83 596.00,606.00 C595.83,613.17 595.83,632.83 596.00,640.00 C596.17,647.17 596.25,646.33 597.00,649.00 C597.75,651.67 598.77,654.17 600.50,656.00 C602.23,657.83 607.40,660.00 607.40,660.00 C607.40,660.00 596.80,687.30 596.80,687.30 C596.80,687.30 555.00,681.10 555.00,681.10 C555.00,681.10 555.00,564.30 555.00,564.30 Z" fill="none" stroke="#ffffff" stroke-width="1"/>
<line x1="555" y1="622.5" x2="559" y2="622.5" stroke="#ffffff" stroke-width="1" />
<line x1="594.2" y1="622.5" x2="602.1" y2="622.5" stroke="#ffffff" stroke-width="1" />
<line x1="596.5" y1="617" x2="596.5" y2="628" stroke="#ffffff" stroke-width="1" />
<path d="M414.00,676.80 C414.00,676.80 521.30,676.20 521.30,676.20 C521.30,676.20 522.38,678.78 523.50,680.50 C524.62,682.22 525.50,684.62 528.00,686.50 C530.50,688.38 534.60,690.73 538.50,691.80 C542.40,692.87 545.15,692.43 551.40,692.90 C557.65,693.37 576.00,694.60 576.00,694.60 C576.00,694.60 588.90,728.30 588.90,728.30 C588.90,728.30 581.60,732.37 578.20,734.70 C574.80,737.03 570.82,739.62 568.50,742.30 C566.18,744.98 564.93,747.95 564.30,750.80 C563.67,753.65 564.70,759.40 564.70,759.40 C564.70,759.40 568.50,760.50 568.50,760.50 C568.50,760.50 568.50,803.30 568.50,803.30 C568.50,803.30 564.30,803.30 564.30,803.30 C564.30,803.30 563.88,807.95 565.30,810.80 C566.72,813.65 569.03,817.37 572.80,820.40 C576.57,823.43 587.90,829.00 587.90,829.00 C587.90,829.00 588.90,834.40 588.90,834.40 C588.90,834.40 576.00,870.90 576.00,870.90 C576.00,870.90 561.95,868.48 555.70,868.30 C549.45,868.12 542.80,868.48 538.50,869.80 C534.20,871.12 532.22,873.52 529.90,876.20 C527.58,878.88 524.60,885.90 524.60,885.90 C524.60,885.90 415.10,886.90 415.10,886.90 C415.10,886.90 409.25,875.35 405.50,866.60 C401.75,857.85 395.43,845.85 392.60,834.40 C389.77,822.95 389.18,810.30 388.50,797.90 C387.82,785.50 387.47,773.22 388.50,760.00 C389.53,746.78 392.05,729.07 394.70,718.60 C397.35,708.13 401.18,704.17 404.40,697.20 C407.62,690.23 414.00,676.80 414.00,676.80 Z" fill="#923133" stroke="#ffffff" stroke-width="1" stroke-dasharray="4 3"/>
<path d="M420.50,682.60 C420.50,682.60 517.00,682.60 517.00,682.60 C517.00,682.60 518.42,684.43 519.50,685.50 C520.58,686.57 521.75,687.50 523.50,689.00 C525.25,690.50 527.50,692.95 530.00,694.50 C532.50,696.05 532.08,697.57 538.50,698.30 C544.92,699.03 568.50,698.90 568.50,698.90 C568.50,698.90 580.40,728.30 580.40,728.30 C580.40,728.30 571.57,733.68 568.50,735.80 C565.43,737.92 563.60,739.22 562.00,741.00 C560.40,742.78 559.78,743.75 558.90,746.50 C558.02,749.25 556.70,757.50 556.70,757.50 C556.70,757.50 396.50,757.50 396.50,757.50 C396.50,757.50 395.00,751.95 396.50,744.40 C398.00,736.85 401.50,722.50 405.50,712.20 C409.50,701.90 420.50,682.60 420.50,682.60 Z" fill="none" stroke="#ffffff"/>
<line x1="396.5" y1="761.5" x2="560" y2="761.5" stroke="#ffffff" stroke-width="1" />
<line x1="389" y1="781.5" x2="568.5" y2="781.5" stroke="#ffffff" stroke-dasharray="17 2 4 2" stroke-dashoffset="7"/>
<path d="M396.50,805.50 C396.50,805.50 556.00,805.50 556.00,805.50 C556.00,805.50 555.68,806.47 556.70,808.60 C557.72,810.73 560.22,815.57 562.10,818.30 C563.98,821.03 564.95,822.50 568.00,825.00 C571.05,827.50 580.40,833.30 580.40,833.30 C580.40,833.30 569.60,862.70 569.60,862.70 C569.60,862.70 553.35,861.52 547.10,861.80 C540.85,862.08 535.95,862.87 532.10,864.40 C528.25,865.93 526.33,868.50 524.00,871.00 C521.67,873.50 518.10,879.40 518.10,879.40 C518.10,879.40 421.60,880.50 421.60,880.50 C421.60,880.50 419.25,875.32 416.20,868.70 C413.15,862.08 406.58,851.33 403.30,840.80 C400.02,830.27 396.50,805.50 396.50,805.50 Z" fill="none" stroke="#ffffff"/>
<line x1="396.5" y1="800.5" x2="560" y2="800.5" stroke="#ffffff" stroke-width="1" />
<line x1="396.5" y1="800.5" x2="396.5" y2="806" stroke="#ffffff" stroke-width="1" />
<line x1="409.5" y1="376" x2="409.5" y2="506" stroke="#ffffff" stroke-width="1" />
<line x1="494.5" y1="378" x2="494.5" y2="507" stroke="#ffffff" stroke-width="1" />
<clipPath id="cp9"><path d="M548.30,557.60 C548.30,557.60 602.10,551.50 602.10,551.50 C602.10,551.50 615.40,589.40 615.40,589.40 C615.40,589.40 610.40,591.73 608.50,593.50 C606.60,595.27 604.97,597.17 604.00,600.00 C603.03,602.83 602.92,604.03 602.70,610.50 C602.48,616.97 602.48,632.72 602.70,638.80 C602.92,644.88 603.03,644.80 604.00,647.00 C604.97,649.20 606.60,650.73 608.50,652.00 C610.40,653.27 615.40,654.60 615.40,654.60 C615.40,654.60 602.10,695.20 602.10,695.20 C602.10,695.20 548.30,689.00 548.30,689.00 C548.30,689.00 548.30,557.60 548.30,557.60 Z"/></clipPath>
<line x1="589" y1="146" x2="589" y2="894" stroke="#91a032" stroke-width="2" stroke-dasharray="5 3" clip-path="url(#cp9)"/>
</g>
<g shape-rendering="crispEdges">
<path d="M416.5,215.5 L415.5,214.5 L411.5,214.5 L410.5,215.5 L410.5,217.5 L411.5,218.5 L415.5,218.5 L416.5,219.5 L416.5,221.5 L415.5,222.5 L411.5,222.5 L410.5,221.5" fill="none" stroke="#ffffff" stroke-width="1"/>
<path d="M426.5,222.5 L426.5,216.5 L428.0,214.5 L431.0,214.5 L432.5,216.5 L432.5,222.5 M426.5,219.5 L432.5,219.5" fill="none" stroke="#ffffff" stroke-width="1"/>
<path d="M469.5,260.5 L468.5,259.5 L464.5,259.5 L463.5,260.5 L463.5,262.5 L464.5,263.5 L468.5,263.5 L469.5,264.5 L469.5,266.5 L468.5,267.5 L464.5,267.5 L463.5,266.5" fill="none" stroke="#ffffff" stroke-width="1"/>
<path d="M479.5,267.5 L479.5,261.5 L481.0,259.5 L484.0,259.5 L485.5,261.5 L485.5,267.5 M479.5,264.5 L485.5,264.5" fill="none" stroke="#ffffff" stroke-width="1"/>
<path d="M475.5,293.5 L474.5,292.5 L470.5,292.5 L469.5,293.5 L469.5,295.5 L470.5,296.5 L474.5,296.5 L475.5,297.5 L475.5,299.5 L474.5,300.5 L470.5,300.5 L469.5,299.5" fill="none" stroke="#ffffff" stroke-width="1"/>
<path d="M485.5,300.5 L485.5,294.5 L487.0,292.5 L490.0,292.5 L491.5,294.5 L491.5,300.5 M485.5,297.5 L491.5,297.5" fill="none" stroke="#ffffff" stroke-width="1"/>
<path d="M469.5,326.5 L468.5,325.5 L464.5,325.5 L463.5,326.5 L463.5,328.5 L464.5,329.5 L468.5,329.5 L469.5,330.5 L469.5,332.5 L468.5,333.5 L464.5,333.5 L463.5,332.5" fill="none" stroke="#ffffff" stroke-width="1"/>
<path d="M479.5,333.5 L479.5,327.5 L481.0,325.5 L484.0,325.5 L485.5,327.5 L485.5,333.5 M479.5,330.5 L485.5,330.5" fill="none" stroke="#ffffff" stroke-width="1"/>
<path d="M475.5,357.5 L474.5,356.5 L470.5,356.5 L469.5,357.5 L469.5,359.5 L470.5,360.5 L474.5,360.5 L475.5,361.5 L475.5,363.5 L474.5,364.5 L470.5,364.5 L469.5,363.5" fill="none" stroke="#ffffff" stroke-width="1"/>
<path d="M485.5,364.5 L485.5,358.5 L487.0,356.5 L490.0,356.5 L491.5,358.5 L491.5,364.5 M485.5,361.5 L491.5,361.5" fill="none" stroke="#ffffff" stroke-width="1"/>
<path d="M426.5,441.5 L425.5,440.5 L421.5,440.5 L420.5,441.5 L420.5,443.5 L421.5,444.5 L425.5,444.5 L426.5,445.5 L426.5,447.5 L425.5,448.5 L421.5,448.5 L420.5,447.5" fill="none" stroke="#ffffff" stroke-width="1"/>
<path d="M436.5,448.5 L436.5,442.5 L438.0,440.5 L441.0,440.5 L442.5,442.5 L442.5,448.5 M436.5,445.5 L442.5,445.5" fill="none" stroke="#ffffff" stroke-width="1"/>
<path d="M511.5,442.5 L510.5,441.5 L506.5,441.5 L505.5,442.5 L505.5,444.5 L506.5,445.5 L510.5,445.5 L511.5,446.5 L511.5,448.5 L510.5,449.5 L506.5,449.5 L505.5,448.5" fill="none" stroke="#ffffff" stroke-width="1"/>
<path d="M521.5,449.5 L521.5,443.5 L523.0,441.5 L526.0,441.5 L527.5,443.5 L527.5,449.5 M521.5,446.5 L527.5,446.5" fill="none" stroke="#ffffff" stroke-width="1"/>
<path d="M462.5,593.5 L461.5,592.5 L457.5,592.5 L456.5,593.5 L456.5,595.5 L457.5,596.5 L461.5,596.5 L462.5,597.5 L462.5,599.5 L461.5,600.5 L457.5,600.5 L456.5,599.5" fill="none" stroke="#ffffff" stroke-width="1"/>
<path d="M472.5,600.5 L472.5,594.5 L474.0,592.5 L477.0,592.5 L478.5,594.5 L478.5,600.5 M472.5,597.5 L478.5,597.5" fill="none" stroke="#ffffff" stroke-width="1"/>
<path d="M576.5,623.5 L575.5,622.5 L571.5,622.5 L570.5,623.5 L570.5,625.5 L571.5,626.5 L575.5,626.5 L576.5,627.5 L576.5,629.5 L575.5,630.5 L571.5,630.5 L570.5,629.5" fill="none" stroke="#ffffff" stroke-width="1"/>
<path d="M586.5,630.5 L586.5,624.5 L588.0,622.5 L591.0,622.5 L592.5,624.5 L592.5,630.5 M586.5,627.5 L592.5,627.5" fill="none" stroke="#ffffff" stroke-width="1"/>
<path d="M483.5,728.5 L482.5,727.5 L478.5,727.5 L477.5,728.5 L477.5,730.5 L478.5,731.5 L482.5,731.5 L483.5,732.5 L483.5,734.5 L482.5,735.5 L478.5,735.5 L477.5,734.5" fill="none" stroke="#ffffff" stroke-width="1"/>
<path d="M493.5,735.5 L493.5,729.5 L495.0,727.5 L498.0,727.5 L499.5,729.5 L499.5,735.5 M493.5,732.5 L499.5,732.5" fill="none" stroke="#ffffff" stroke-width="1"/>
<path d="M483.5,834.5 L482.5,833.5 L478.5,833.5 L477.5,834.5 L477.5,836.5 L478.5,837.5 L482.5,837.5 L483.5,838.5 L483.5,840.5 L482.5,841.5 L478.5,841.5 L477.5,840.5" fill="none" stroke="#ffffff" stroke-width="1"/>
<path d="M493.5,841.5 L493.5,835.5 L495.0,833.5 L498.0,833.5 L499.5,835.5 L499.5,841.5 M493.5,838.5 L499.5,838.5" fill="none" stroke="#ffffff" stroke-width="1"/>
</g>
<g shape-rendering="crispEdges">
</g>
<g shape-rendering="crispEdges">
<path d="M19.5,176.5 L21.5,174.5 L21.5,186.5 M19.5,186.5 L23.5,186.5" fill="none" stroke="#8080ff" stroke-width="1"/>
<rect x="32" y="180" width="7" height="1" fill="#8080ff"/>
<path d="M69.5,175.5 L68.5,174.5 L63.5,174.5 L62.5,175.5 L62.5,179.5 L63.5,180.5 L68.5,180.5 L69.5,181.5 L69.5,185.5 L68.5,186.5 L63.5,186.5 L62.5,185.5" fill="none" stroke="#8080ff" stroke-width="1"/>
<path d="M242.5,186.5 L242.5,176.5 L244.0,174.5 L247.0,174.5 L248.5,176.5 L248.5,186.5 M242.5,182.5 L248.5,182.5" fill="none" stroke="#8080ff" stroke-width="1"/>
<path d="M303.5,173.5 L308.5,173.5 L308.5,184.5 L307.5,185.5 L302.5,185.5 L302.5,174.5 Z M303.5,184.5 L307.5,174.5" fill="none" stroke="#8080ff" stroke-width="1"/>
<path d="M362.5,173.5 L367.5,173.5 L367.5,184.5 L366.5,185.5 L361.5,185.5 L361.5,174.5 Z M362.5,184.5 L366.5,174.5" fill="none" stroke="#8080ff" stroke-width="1"/>
<path d="M438.5,173.5 L443.5,173.5 L443.5,184.5 L442.5,185.5 L437.5,185.5 L437.5,174.5 Z M438.5,184.5 L442.5,174.5" fill="none" stroke="#8080ff" stroke-width="1"/>
<path d="M573.5,173.5 L578.5,173.5 L578.5,184.5 L577.5,185.5 L572.5,185.5 L572.5,174.5 Z M573.5,184.5 L577.5,174.5" fill="none" stroke="#8080ff" stroke-width="1"/>
<path d="M633.5,173.5 L638.5,173.5 L638.5,184.5 L637.5,185.5 L632.5,185.5 L632.5,174.5 Z M633.5,184.5 L637.5,174.5" fill="none" stroke="#8080ff" stroke-width="1"/>
<path d="M708.5,173.5 L713.5,173.5 L713.5,184.5 L712.5,185.5 L707.5,185.5 L707.5,174.5 Z M708.5,184.5 L712.5,174.5" fill="none" stroke="#8080ff" stroke-width="1"/>
<path d="M843.5,173.5 L848.5,173.5 L848.5,184.5 L847.5,185.5 L842.5,185.5 L842.5,174.5 Z M843.5,184.5 L847.5,174.5" fill="none" stroke="#8080ff" stroke-width="1"/>
<path d="M903.5,173.5 L908.5,173.5 L908.5,184.5 L907.5,185.5 L902.5,185.5 L902.5,174.5 Z M903.5,184.5 L907.5,174.5" fill="none" stroke="#8080ff" stroke-width="1"/>
<path d="M978.5,173.5 L983.5,173.5 L983.5,184.5 L982.5,185.5 L977.5,185.5 L977.5,174.5 Z M978.5,184.5 L982.5,174.5" fill="none" stroke="#8080ff" stroke-width="1"/>
<rect x="467" y="179" width="7" height="1" fill="#8080ff"/>
<rect x="482" y="179" width="7" height="1" fill="#8080ff"/>
<rect x="497" y="179" width="7" height="1" fill="#8080ff"/>
<rect x="737" y="179" width="7" height="1" fill="#8080ff"/>
<rect x="752" y="179" width="7" height="1" fill="#8080ff"/>
<rect x="767" y="179" width="7" height="1" fill="#8080ff"/>
</g>
<g shape-rendering="crispEdges">
<path d="M305,151 L312,151 L312,152 L332,152 L332,151 L339,151 L340,152 L340,155 L339,156 L335,156 L335,157 L309,157 L309,156 L305,156 L304,155 L304,152 Z" fill="#8080ff"/>
<path d="M450,141 L455,141 L455,140 L460,139 L461,141 L463,145 L464,147 L461,150 L461,158 L464,161 L463,164 L461,166 L460,169 L455,168 L450,167 Z" fill="#8080ff"/>
<path d="M575,150 L582,150 L582,151 L602,151 L602,150 L609,150 L609,156 L608,157 L606,158 L606,157 L578,157 L578,158 L576,157 L575,156 Z" fill="#8080ff"/>
<path d="M715,138 L737,138 L740,141 L743,141 L743,167 L740,168 L737,170 L717,170 L714,164 L712,160 L711,158 L711,149 L712,146 L714,142 Z" fill="#8080ff"/>
<path d="M853,140 L864,140 L866,143 L869,148 L871,152 L870,157 L868,161 L866,164 L864,168 L853,168 Z" fill="#8080ff"/>
<path d="M982,143 L1003,143 L1008,146 L1014,147 L1017,153 L1013,157 L1012,160 L1013,165 L977,165 L977,154 L980,148 Z" fill="#8080ff"/>
</g>
</svg>
</body></html>
